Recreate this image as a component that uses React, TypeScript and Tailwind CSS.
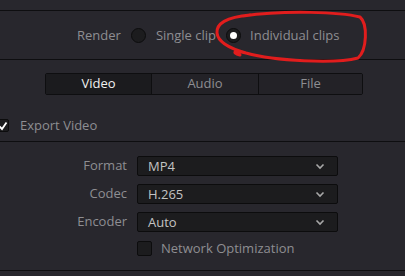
import React from "react";

function Chevron() {
  return (
    <svg width="10" height="7" viewBox="0 0 10 7" className="shrink-0">
      <path d="M1.5 1.5 L5 5 L8.5 1.5" fill="none" stroke="#a8a8a8" strokeWidth="1.6" />
    </svg>
  );
}

function Select({ value }: { value: string }) {
  return (
    <div className="w-[201px] h-[20px] bg-[#1c1c1e] border border-[#0c0c0d] rounded-[2px] flex items-center justify-between pl-[10px] pr-[12px] text-[#c4c4c4]">
      <span className="leading-none">{value}</span>
      <Chevron />
    </div>
  );
}

export default function App() {
  return (
    <div
      className="relative w-[405px] h-[276px] bg-[#28272d] text-[13px] text-[#8e8e92] overflow-hidden"
      style={{ fontFamily: '"Open Sans", "Noto Sans", sans-serif' }}
    >
      <div className="h-[11px] border-b border-[#0e0e10]" />
      <div className="h-[49px] border-b border-[#0e0e10] flex items-center pl-[77px] pt-[1px]">
        <span>Render</span>
        <span className="ml-[10px] w-[15px] h-[15px] rounded-full bg-[#1c1c1e] border border-[#0c0c0d]" />
        <span className="ml-[10px]">Single clip</span>
        <span className="ml-[10px] w-[15px] h-[15px] rounded-full bg-[#1c1c1e] border border-[#0c0c0d] flex items-center justify-center">
          <span className="w-[7px] h-[7px] rounded-full bg-white" />
        </span>
        <span className="ml-[9px]">Individual clips</span>
      </div>
      <div className="h-[82px] border-b border-[#0e0e10] flex flex-col pt-[13px]">
        <div className="ml-[45px] w-[318px] h-[22px] border border-[#0e0e10] rounded-[2px] flex overflow-hidden">
          <div className="w-[106px] bg-[#1b1b1e] text-[#f0f0f0] flex items-center justify-center border-r border-[#0e0e10]">Video</div>
          <div className="w-[107px] bg-[#232227] flex items-center justify-center border-r border-[#0e0e10]">Audio</div>
          <div className="flex-1 bg-[#232227] flex items-center justify-center">File</div>
        </div>
        <div className="flex items-center mt-[21px] ml-[-3px]">
          <span className="w-[12px] h-[13px] bg-[#1c1c1e] border border-[#0c0c0d] rounded-[2px] flex items-center justify-center">
            <svg width="10" height="10" viewBox="0 0 10 10">
              <path d="M1.5 5.5 L4 8 L8.5 1.5" fill="none" stroke="#ffffff" strokeWidth="1.8" />
            </svg>
          </span>
          <span className="ml-[11px]">Export Video</span>
        </div>
      </div>
      <div className="h-[129px] border-b border-[#0e0e10] pt-[14px]">
        <div className="grid grid-cols-[127px_auto] gap-x-[10px] gap-y-[8px] items-center justify-start">
          <span className="text-right">Format</span>
          <Select value="MP4" />
          <span className="text-right">Codec</span>
          <Select value="H.265" />
          <span className="text-right">Encoder</span>
          <Select value="Auto" />
          <span />
          <div className="flex items-center mt-[-1px]">
            <span className="w-[15px] h-[15px] bg-[#1c1c1e] border border-[#0c0c0d] rounded-[2px]" />
            <span className="ml-[9px]">Network Optimization</span>
          </div>
        </div>
      </div>
      <svg className="absolute left-0 top-0 pointer-events-none" width="405" height="276" viewBox="0 0 405 276">
        <path
          d="M243 16 C 285 10, 340 12, 360 17 C 368 24, 367 50, 358 58 C 335 64, 275 61, 246 53 C 236 50, 230 52, 240 55 M 246 53 C 228 48, 218 42, 217 33 C 216 24, 226 17, 250 15"
          fill="none"
          stroke="#e11d1d"
          strokeWidth="3"
          strokeLinecap="round"
          strokeLinejoin="round"
        />
      </svg>
    </div>
  );
}
